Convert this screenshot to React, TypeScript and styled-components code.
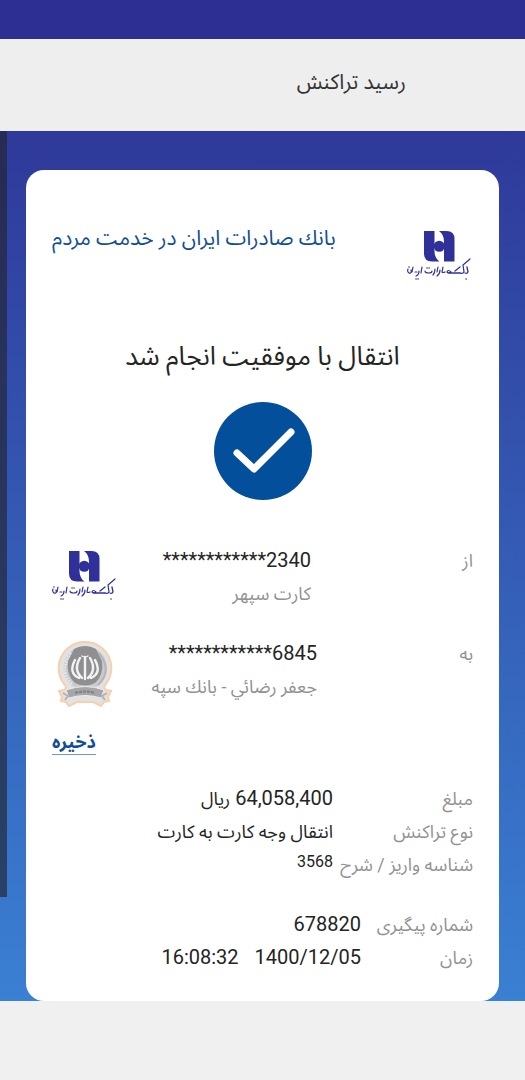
import React from "react";
import styled, { createGlobalStyle } from "styled-components";

const GlobalStyle = createGlobalStyle`
  * { box-sizing: border-box; }
  body {
    margin: 0;
    background: #f0f0f0;
    font-family: Roboto, "Noto Sans Arabic", "DejaVu Sans", sans-serif;
    font-size: 20px;
    line-height: 33px;
    color: #242424;
  }
  h1, h2, p, dl, dd, dt { margin: 0; font-weight: 400; }
`;

const StatusBar = styled.div`
  height: 39px;
  background: #2d2f92;
`;

const Header = styled.header`
  display: flex;
  align-items: center;
  height: 92px;
  padding: 0 119px 6px;
  background: #eeeeee;
`;

const PageTitle = styled.h1`
  font-size: 21px;
  line-height: 32px;
  color: #333333;
`;

const Backdrop = styled.main`
  position: relative;
  padding: 39px 26px 0;
  background: linear-gradient(#2f399a, #3a80d3);
`;

const ScrollTrack = styled.div`
  position: absolute;
  top: 0;
  left: 0;
  width: 7px;
  height: 88%;
  background: rgba(36, 36, 48, 0.65);
`;

const Card = styled.article`
  display: flex;
  flex-direction: column;
  padding: 52px 26px 27px;
  border-radius: 18px;
  background: #ffffff;
`;

const Brand = styled.div`
  display: flex;
  justify-content: space-between;
  height: 68px;
`;

const Slogan = styled.p`
  color: #104f96;
  font-size: 21px;
`;

const BrandMark = styled.div`
  padding-top: 6px;
`;

const Outcome = styled.section`
  display: flex;
  flex-direction: column;
  align-items: center;
  gap: 26px;
  padding-top: 46px;
`;

const OutcomeTitle = styled.h2`
  font-size: 26px;
  line-height: 40px;
`;

const Parties = styled.section`
  display: flex;
  flex-direction: column;
  gap: 27px;
  padding-top: 44px;
`;

const Party = styled.div<{ $label: number }>`
  display: grid;
  grid-template-columns: ${(p) => p.$label}px 1fr auto;
  align-items: start;
`;

const Label = styled.dt`
  color: #929292;
  font-size: 18px;
  white-space: nowrap;
`;

const PartyLabel = styled.span`
  color: #929292;
  font-size: 18px;
`;

const CardNumber = styled.p`
  direction: ltr;
  text-align: right;
`;

const Owner = styled.p`
  color: #929292;
  font-size: 18px;
`;

const BankLogo = styled.div`
  display: flex;
  justify-content: center;
  width: 66px;
  height: 66px;
  padding-top: 4px;
`;

const SaveLink = styled.a`
  align-self: flex-end;
  margin: 27px 0;
  border-bottom: 1px solid #6f9bc9;
  color: #104f96;
  font-size: 18px;
  font-weight: 700;
  line-height: 24px;
  text-decoration: none;
`;

const Details = styled.dl<{ $label: number }>`
  display: grid;
  grid-template-columns: ${(p) => p.$label}px 1fr;
  grid-auto-rows: 33px;
  & + & { margin-top: 27px; }
`;

const valueSizes = { number: 20, text: 18, small: 16 };

const Value = styled.dd<{ $kind?: "text" | "small" }>`
  font-size: ${(p) => valueSizes[p.$kind ?? "number"]}px;
  line-height: ${(p) => (p.$kind === "small" ? 28 : 33)}px;
`;

const Unit = styled.span`
  font-size: 18px;
`;

const Moment = styled.span`
  display: flex;
  gap: 16px;
`;

function SaderatLogo() {
  return (
    <svg width="66" height="55" viewBox="0 -3 66 55" role="img" aria-label="بانک صادرات ایران">
      <g fill="#30309a">
        <path d="M17 0h10.500v20q0 7 5 10.500h-7.500q-8 0-8-8Z" />
        <path d="M47.500 30.500H37v-20Q37 3.500 32 0h7.500q8 0 8 8Z" />
        <circle cx="32.250" cy="15.250" r="5.500" />
      </g>
      <g fill="none" stroke="#30309a" strokeLinecap="round">
        <path d="M63 28 56 34l1 7q-1 2-4 1" strokeWidth="1.200" />
        <path d="M60 36l1 5q-1 2-3 1M53 36l-5 4M53 42H43" strokeWidth="1.300" />
        <path d="M44 41q-3-3-4 0 2 2 4 0M38 41q-2 1-3 0M36 36l-1 5M33 39q0 4-3 6M31 36l-1 5M28 38q0 4-2 6" strokeWidth="1.200" />
        <path d="M25 40q0 2-3 2-4 0-4-2M15 36l-1 6M12 40q0 4-3 5M10 41H8M6 36l-1 5M4 39q1 4-2 3-2-1-1-4" strokeWidth="1.200" />
        <path d="M59 48h.1M22 37h.1M20 37h.1M11 48h.1M9 48h.1M2 36h.1" strokeWidth="1.500" />
      </g>
    </svg>
  );
}

function SepahLogo() {
  return (
    <svg width="56" height="66" viewBox="0 0 56 66" role="img" aria-label="بانک سپه">
      <path
        d="M28 1a26 26 0 0 1 20 43q-2 3 1 5l5 1-3 6 1 4-5 1-3 4-8-4H20l-8 4-3-4-5-1 1-4-3-6 5-1q3-2 1-5A26 26 0 0 1 28 1Z"
        fill="#e2e2e2"
        stroke="#f7cfae"
        strokeWidth="2"
      />
      <circle cx="28" cy="27" r="22" fill="#c9cbcd" />
      <path d="M14 12Q0 30 15 44" fill="none" stroke="#e3e4e6" strokeWidth="4" strokeDasharray="2 1" />
      <path d="M42 12q14 18-1 32" fill="none" stroke="#b4b6b9" strokeWidth="2" />
      <path d="M17 8q11-6 22 0l6 12q2 14-7 22-10 5-20 0-9-8-7-22Z" fill="#8f8f91" />
      <g fill="none" stroke="#f3f3f3" strokeWidth="2.400" strokeLinecap="round">
        <path d="M28 16v22M23 17q-7 12 2 20M33 17q7 12-2 20M18 19q-7 13 4 18M38 19q7 13-4 18" />
        <path d="M25 15q3 2 6 0" strokeWidth="1.500" />
      </g>
      <path d="M9 49q19-7 38 0l-3 8q-16-5-32 0Z" fill="#a6a6a8" stroke="#ececec" />
      <path d="M18 52q10-3 20 0" fill="none" stroke="#7f8082" strokeWidth="2" strokeDasharray="3 1" />
      <path d="M6 52l5 3-3 4M50 52l-5 3 3 4" fill="none" stroke="#b2b2b4" strokeWidth="2" />
    </svg>
  );
}

function SuccessMark() {
  return (
    <svg width="98" height="98" viewBox="0 0 98 98" aria-hidden="true">
      <circle cx="49" cy="49" r="49" fill="#034f9b" />
      <path d="M23 51 40 67 77 30" fill="none" stroke="#fff" strokeWidth="7" strokeLinecap="round" strokeLinejoin="round" />
    </svg>
  );
}

export default function App() {
  return (
    <div dir="rtl" lang="fa">
      <GlobalStyle />
      <StatusBar />
      <Header>
        <PageTitle>رسید تراکنش</PageTitle>
      </Header>
      <Backdrop>
        <ScrollTrack />
        <Card>
          <Brand>
            <BrandMark>
              <SaderatLogo />
            </BrandMark>
            <Slogan>بانك صادرات ایران در خدمت مردم</Slogan>
          </Brand>
          <Outcome>
            <OutcomeTitle>انتقال با موفقیت انجام شد</OutcomeTitle>
            <SuccessMark />
          </Outcome>
          <Parties>
            <Party $label={162}>
              <PartyLabel>از</PartyLabel>
              <div>
                <CardNumber>************2340</CardNumber>
                <Owner>کارت سپهر</Owner>
              </div>
              <BankLogo>
                <SaderatLogo />
              </BankLogo>
            </Party>
            <Party $label={156}>
              <PartyLabel>به</PartyLabel>
              <div>
                <CardNumber>************6845</CardNumber>
                <Owner>جعفر رضائي - بانك سپه</Owner>
              </div>
              <BankLogo>
                <SepahLogo />
              </BankLogo>
            </Party>
          </Parties>
          <SaveLink href="#save">ذخیره</SaveLink>
          <Details $label={140}>
            <Label>مبلغ</Label>
            <Value>
              64,058,400 <Unit>ریال</Unit>
            </Value>
            <Label>نوع تراکنش</Label>
            <Value $kind="text">انتقال وجه کارت به کارت</Value>
            <Label>شناسه واریز / شرح</Label>
            <Value $kind="small">3568</Value>
          </Details>
          <Details $label={112}>
            <Label>شماره پیگیری</Label>
            <Value>678820</Value>
            <Label>زمان</Label>
            <Value>
              <Moment>
                <span>1400/12/05</span>
                <span>16:08:32</span>
              </Moment>
            </Value>
          </Details>
        </Card>
      </Backdrop>
    </div>
  );
}
